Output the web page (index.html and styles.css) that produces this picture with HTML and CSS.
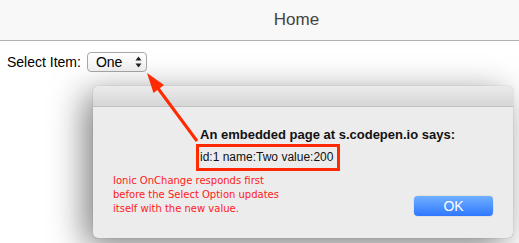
FILE: index.html
```html
<!DOCTYPE html>
<html lang="en">
<head>
  <meta charset="UTF-8">
  <meta name="viewport" content="width=device-width, initial-scale=1.0">
  <title>Home</title>
  <link rel="stylesheet" href="styles.css">
</head>
<body>
  <div class="toolbar">
    <div class="toolbar-title">Home</div>
  </div>
  <div class="content">
    <label class="select-row">
      <span class="select-label">Select Item:</span>
      <span class="select-box">
        <span class="select-value">One</span>
        <svg class="select-arrows" width="7" height="12" viewBox="0 0 7 12">
          <path d="M3.5 0.5 L6.5 4.5 L0.5 4.5 Z" fill="#222"/>
          <path d="M3.5 11.5 L6.5 7.5 L0.5 7.5 Z" fill="#222"/>
        </svg>
      </span>
    </label>
  </div>

  <!-- alert dialog -->
  <div class="dialog">
    <div class="dialog-titlebar"></div>
    <div class="dialog-body">
      <div class="dialog-heading">An embedded page at s.codepen.io says:</div>
      <div class="dialog-message"><span class="highlight">id:1 name:Two value:200</span></div>
      <div class="dialog-footer">
        <p class="note">Ionic OnChange responds first<br>before the Select Option updates<br>itself with the new value.</p>
        <button class="ok-button">OK</button>
      </div>
    </div>
  </div>

  <!-- annotation arrow -->
  <svg class="annotation" width="519" height="243" viewBox="0 0 519 243">
    <line x1="197" y1="141" x2="157" y2="87" stroke="#ff2a00" stroke-width="3"/>
    <polygon points="147,73 153.5,93 164,85" fill="#ff2a00"/>
  </svg>
</body>
</html>
```

FILE: styles.css
```css
body {
  margin: 0;
  font-family: 'Liberation Sans', Arial, sans-serif;
  background-color: #fff;
  color: #000;
  width: 519px;
  height: 243px;
  overflow: hidden;
  position: relative;
}
.toolbar {
  height: 40px;
  background-color: #f8f8f8;
  border-bottom: 1px solid #b2b2b2;
  display: flex;
  align-items: center;
  justify-content: center;
  padding-left: 74px;
}
.toolbar-title {
  font-size: 17px;
  color: #444;
}
.content {
  padding: 11px 7px;
}
.select-row {
  display: flex;
  align-items: center;
  gap: 6px;
  font-size: 14px;
}
.select-box {
  display: flex;
  align-items: center;
  justify-content: space-between;
  width: 58px;
  height: 18px;
  border: 1px solid #a8a8a8;
  border-radius: 4px;
  background: linear-gradient(#fff, #f4f4f4);
}
.select-value {
  margin-left: 8px;
}
.select-arrows {
  margin-right: 4px;
}
.dialog {
  position: absolute;
  left: 93px;
  top: 86px;
  width: 420px;
  height: 152px;
  border-radius: 5px;
  background-color: #ececec;
  box-shadow: -8px 8px 34px rgba(0, 0, 0, 0.5), 0 0 1px rgba(0, 0, 0, 0.4);
  overflow: hidden;
}
.dialog-titlebar {
  height: 20px;
  background: linear-gradient(#ebebeb, #d6d6d6);
  border-bottom: 1px solid #c2c2c2;
}
.dialog-body {
  padding: 20px 20px 0 20px;
}
.dialog-heading {
  margin-left: 87px;
  font-size: 13px;
  font-weight: bold;
  color: #111;
}
.dialog-message {
  margin-top: 2px;
  margin-left: 83px;
}
.highlight {
  display: inline-block;
  border: 3px solid #ff2a00;
  padding: 2px 4px 2px 1px;
  font-size: 12px;
  line-height: 17px;
  color: #111;
}
.dialog-footer {
  display: flex;
  align-items: flex-end;
  justify-content: space-between;
}
.note {
  margin: 3px 0 0 0;
  font-family: 'DejaVu Sans', Verdana, sans-serif;
  font-size: 10px;
  line-height: 14px;
  color: #ff2020;
}
.ok-button {
  width: 79px;
  height: 20px;
  border: none;
  border-radius: 4px;
  background: linear-gradient(#70b0ff, #2f78ff);
  color: #fff;
  font-family: 'Liberation Sans', Arial, sans-serif;
  font-size: 14px;
  box-shadow: 0 0 1px rgba(0, 0, 0, 0.4);
}
.annotation {
  position: absolute;
  left: 0;
  top: 0;
  pointer-events: none;
}
```
